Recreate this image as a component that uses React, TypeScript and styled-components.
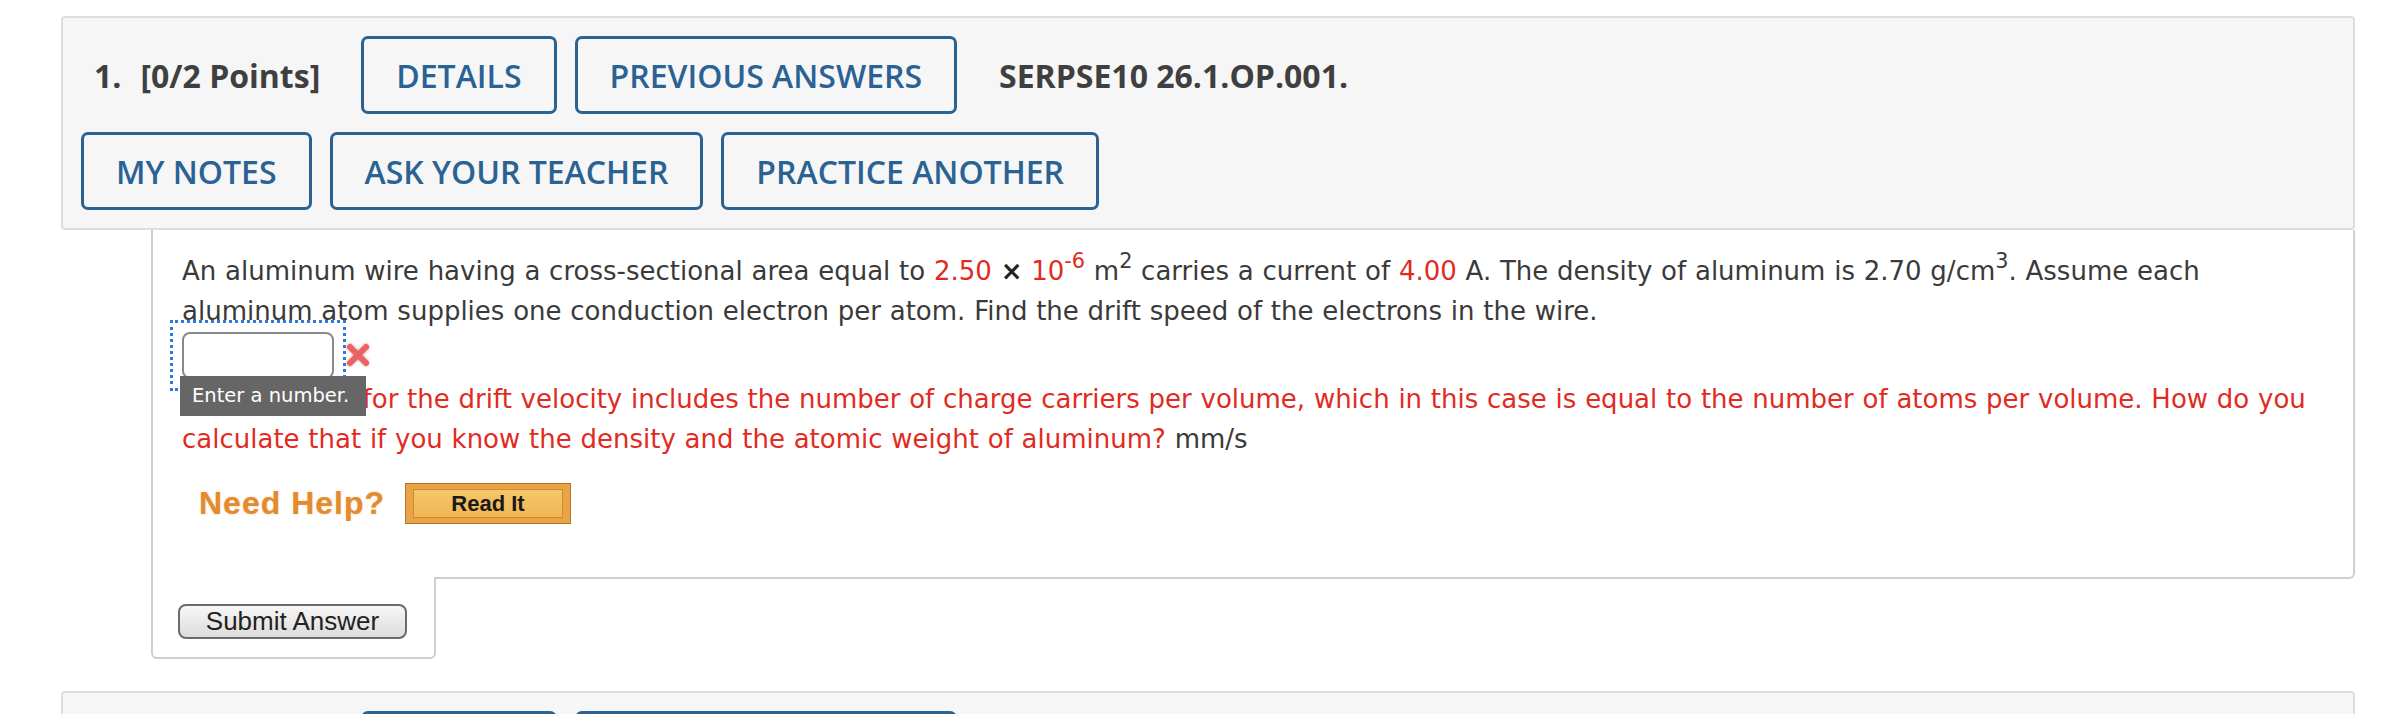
import React from 'react';
import styled, { createGlobalStyle } from 'styled-components';

const GlobalStyle = createGlobalStyle`
  body {
    margin: 0;
    background: #ffffff;
  }
`;

const headerButtons = ['DETAILS', 'PREVIOUS ANSWERS'];
const toolButtons = ['MY NOTES', 'ASK YOUR TEACHER', 'PRACTICE ANOTHER'];

const App: React.FC = () => (
  <Page>
    <GlobalStyle />
    <Question>
      <Header>
        <HeaderRow>
          <Number>1.</Number>
          <Points>[0/2 Points]</Points>
          <ButtonGroup>
            {headerButtons.map((b) => (
              <OutlineButton key={b}>{b}</OutlineButton>
            ))}
          </ButtonGroup>
          <Code>SERPSE10 26.1.OP.001.</Code>
        </HeaderRow>
        <ButtonGroup>
          {toolButtons.map((b) => (
            <OutlineButton key={b}>{b}</OutlineButton>
          ))}
        </ButtonGroup>
      </Header>

      <Body>
        <Prompt>
          An aluminum wire having a cross-sectional area equal to <Red>2.50</Red> <Times>×</Times>{' '}
          <Red>
            10<Sup>-6</Sup>
          </Red>{' '}
          m<Sup>2</Sup> carries a current of <Red>4.00</Red> A. The density of aluminum is 2.70 g/cm
          <Sup>3</Sup>. Assume each
          <br />
          aluminum atom supplies one conduction electron per atom. Find the drift speed of the electrons in the wire.
        </Prompt>

        <AnswerRow>
          <FocusRing>
            <AnswerInput type="text" />
          </FocusRing>
          <WrongMark viewBox="0 0 28 28">
            <path d="M6 6 L22 22 M22 6 L6 22" />
          </WrongMark>
          <Tooltip>Enter a number.</Tooltip>
        </AnswerRow>

        <Feedback>
          <Red>
            The equation for the drift velocity includes the number of charge carriers per volume, which in this case is
            equal to the number of atoms per volume. How do you
            <br />
            calculate that if you know the density and the atomic weight of aluminum?
          </Red>{' '}
          mm/s
        </Feedback>

        <HelpRow>
          <NeedHelp>Need Help?</NeedHelp>
          <ReadIt>
            <ReadItFace>Read It</ReadItFace>
          </ReadIt>
        </HelpRow>
      </Body>

      <SubmitTab>
        <SubmitButton>Submit Answer</SubmitButton>
      </SubmitTab>
    </Question>

    <NextQuestion>
      <Header>
        <HeaderRow>
          <Number>2.</Number>
          <Points>[0/2 Points]</Points>
          <ButtonGroup>
            {headerButtons.map((b) => (
              <OutlineButton key={b}>{b}</OutlineButton>
            ))}
          </ButtonGroup>
          <Code>SERPSE10 26.1.OP.002.</Code>
        </HeaderRow>
      </Header>
    </NextQuestion>
  </Page>
);

export default App;

const Page = styled.div`
  padding: 16px 33px 0 61px;
`;

const Question = styled.div`
  display: flex;
  flex-direction: column;
`;

const NextQuestion = styled(Question)`
  margin-top: 32px;
`;

const Header = styled.div`
  background: #f6f6f6;
  border: 2px solid #dedede;
  border-radius: 4px;
  padding: 18px;
  display: flex;
  flex-direction: column;
  gap: 18px;
  font-family: 'Open Sans', sans-serif;
`;

const HeaderRow = styled.div`
  display: flex;
  align-items: center;
`;

const Number = styled.span`
  margin-left: 13px;
  margin-right: 19px;
  font-size: 32px;
  font-weight: 700;
  color: #3f3f3f;
`;

const Points = styled.span`
  margin-right: 41px;
  font-size: 32px;
  font-weight: 700;
  color: #3f3f3f;
`;

const Code = styled.span`
  margin-left: 42px;
  font-size: 32px;
  font-weight: 700;
  color: #3f3f3f;
`;

const ButtonGroup = styled.div`
  display: flex;
  gap: 18px;
`;

const OutlineButton = styled.button`
  box-sizing: border-box;
  height: 78px;
  padding: 0 32px;
  border: 3px solid #2b6294;
  border-radius: 7px;
  background: transparent;
  color: #2b6294;
  font-family: 'Open Sans', sans-serif;
  font-size: 32px;
  font-weight: 600;
  cursor: pointer;
`;

const Body = styled.div`
  margin-left: 90px;
  border: 2px solid #cfcfcf;
  border-top: none;
  border-radius: 0 0 6px 0;
  padding: 21px 20px 53px 29px;
  font-family: 'DejaVu Sans', Verdana, sans-serif;
  font-size: 26px;
  color: #3a3a3a;
  word-spacing: 0.5px;
`;

const Prompt = styled.div`
  line-height: 40px;
`;

const Red = styled.span`
  color: #e12b22;
`;

const Times = styled.b`
  color: #222;
`;

const Sup = styled.sup`
  font-size: 0.8em;
  line-height: 0;
  vertical-align: 12px;
`;

const AnswerRow = styled.div`
  position: relative;
  display: flex;
  align-items: center;
  height: 48px;
`;

const FocusRing = styled.span`
  display: inline-flex;
  outline: 3px dotted #2f78dc;
  outline-offset: 9px;
`;

const AnswerInput = styled.input`
  box-sizing: border-box;
  width: 152px;
  height: 47px;
  margin: 0;
  border: 2px solid #8a8a8a;
  border-radius: 8px;
  background: #fff;
`;

const WrongMark = styled.svg`
  width: 28px;
  height: 28px;
  margin-left: 10px;
  fill: none;
  stroke: #e86363;
  stroke-width: 6;
  stroke-linecap: round;
  filter: drop-shadow(0 0 1.5px rgba(210, 70, 70, 0.6));
`;

const Tooltip = styled.div`
  position: absolute;
  left: -2px;
  top: 45px;
  box-sizing: border-box;
  width: 186px;
  height: 40px;
  padding: 0 12px;
  background: #666666;
  color: #ffffff;
  font-size: 19.5px;
  line-height: 40px;
  word-spacing: 0;
  white-space: nowrap;
`;

const Feedback = styled.div`
  line-height: 40px;
`;

const HelpRow = styled.div`
  display: flex;
  align-items: center;
  gap: 20px;
  margin-top: 24px;
  padding-left: 17px;
`;

const NeedHelp = styled.span`
  font-family: 'Liberation Sans', Arial, sans-serif;
  font-size: 32px;
  font-weight: 700;
  letter-spacing: 1px;
  word-spacing: 0;
  color: #e38b2f;
  text-shadow: 0 0 2px rgba(227, 139, 47, 0.45);
`;

const ReadIt = styled.div`
  box-sizing: border-box;
  width: 166px;
  height: 41px;
  padding: 5px 7px;
  border: 1px solid #b5772f;
  background: #eaa445;
`;

const ReadItFace = styled.div`
  box-sizing: border-box;
  height: 100%;
  display: flex;
  align-items: center;
  justify-content: center;
  border: 1px solid #c98a3a;
  background: linear-gradient(#f6c66a, #f0b652);
  font-family: 'Liberation Sans', Arial, sans-serif;
  font-size: 22px;
  font-weight: 700;
  word-spacing: 0;
  color: #1a1a1a;
`;

const SubmitTab = styled.div`
  margin: -2px 0 0 90px;
  width: 285px;
  box-sizing: border-box;
  background: #ffffff;
  border: 2px solid #cfcfcf;
  border-top: none;
  border-radius: 0 0 6px 6px;
  padding: 27px 0 18px 25px;
`;

const SubmitButton = styled.button`
  box-sizing: border-box;
  width: 229px;
  height: 35px;
  padding: 0;
  border: 2px solid #6b6b6b;
  border-radius: 8px;
  background: linear-gradient(#f7f7f7, #dcdcdc);
  font-family: 'Liberation Sans', Arial, sans-serif;
  font-size: 26px;
  color: #222222;
  cursor: pointer;
`;
